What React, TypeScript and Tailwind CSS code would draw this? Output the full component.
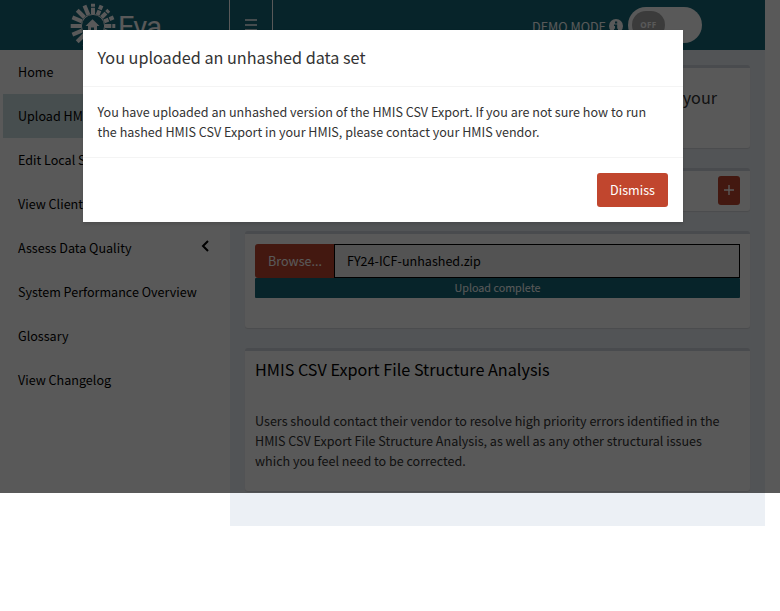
import React from "react";

const navItems = [
  { label: "Home" },
  { label: "Upload HMIS CSV Export", active: true },
  { label: "Edit Local Settings" },
  { label: "View Client Counts" },
  { label: "Assess Data Quality", chevron: true },
  { label: "System Performance Overview" },
  { label: "Glossary" },
  { label: "View Changelog" },
];

function Card({ className, children }: { className: string; children?: React.ReactNode }) {
  return (
    <section className={`rounded-[3px] border-t-[3px] border-[#d2d6de] bg-white shadow-[0_1px_1px_rgba(0,0,0,0.1)] ${className}`}>
      {children}
    </section>
  );
}

function Logo() {
  const rays = Array.from({ length: 16 }, (_, i) => i * 22.5);
  return (
    <svg className="mt-[2px]" width="46" height="46" viewBox="-23 -23 46 46" fill="none" stroke="#fff">
      {rays.map((a, i) => (
        <line
          key={a}
          x1="0"
          y1="-22.3"
          x2="0"
          y2="-12"
          strokeWidth="4"
          strokeDasharray={i < 5 ? (i % 2 ? "4.5 1 5" : "3 1 7") : undefined}
          transform={`rotate(${a})`}
        />
      ))}
      <path d="M-.5-6.8 6.5 0H4v5.5H1V1.5h-3v4h-3V0h-2.5Z" fill="#fff" stroke="none" />
      <circle r="11.6" strokeWidth="1" />
    </svg>
  );
}

function Header() {
  return (
    <header className="flex h-[50px] w-[765px] bg-[#16697a] text-white">
      <div className="flex w-[229px] items-center pl-[70px]">
        <Logo />
        <span className="ml-[2px] mt-[4px] font-[Roboto,sans-serif] text-[29px] leading-[40px] font-normal tracking-[-0.8px]">Eva</span>
      </div>
      <div className="flex w-11 justify-center border-x border-white pt-[19px]">
        <svg width="12" height="12" viewBox="0 0 12 12" fill="#fff">
          <path d="M0 .2h12v1.500H0zM0 5.200h12v1.500H0zM0 10.200h12v1.500H0z" />
        </svg>
      </div>
      <div className="flex flex-1 items-start justify-end pr-[63px]">
        <span className="mt-[16.5px] text-[12.57px] leading-5">DEMO MODE</span>
        <svg className="mt-[19px] ml-[3px]" width="14" height="14" viewBox="0 0 14 14">
          <circle cx="7" cy="7" r="7" fill="#fff" />
          <path d="M6 2.500h2.200v2H6zM5 5.600h3.200v4.200H9v1.400H5V9.800h1V7H5z" fill="#16697a" />
        </svg>
        <div className="mt-[7px] ml-[5px] h-9 w-[74px] rounded-full bg-white p-1">
          <div className="flex h-7 w-[33px] items-center justify-center rounded-full bg-[#aaa] font-['Open_Sans',sans-serif] text-[8px] font-bold tracking-[0.4px]">
            OFF
          </div>
        </div>
      </div>
    </header>
  );
}

function Sidebar() {
  return (
    <nav className="w-[230px] text-[12.57px] leading-5 text-black">
      {navItems.map((item) => (
        <div
          key={item.label}
          className={`flex h-11 items-center justify-between border-l-[3px] border-white pr-5 pl-[15px] whitespace-nowrap ${item.active ? "bg-[#cbdfe2]" : ""}`}
        >
          <span>{item.label}</span>
          {item.chevron && (
            <svg className="-mt-1" width="9" height="12" viewBox="0 0 9 12" fill="none" stroke="#000" strokeWidth="2">
              <path d="M7 1 2 6l5 5" />
            </svg>
          )}
        </div>
      ))}
    </nav>
  );
}

function Modal() {
  return (
    <div className="absolute inset-x-0 top-0 h-[493px] bg-black/65 pt-[30px] pl-[83px]">
      <div className="h-48 w-[600px] bg-white text-[#333] shadow-[0_2px_3px_rgba(0,0,0,0.125)]">
        <h4 className="h-[57px] border-b border-[#f4f4f4] px-[14.5px] pt-[17px] text-[16.2px] leading-5">
          You uploaded an unhashed data set
        </h4>
        <p className="h-[71px] border-b border-[#f4f4f4] px-[14.5px] pt-[15px] text-[12.57px] leading-5">
          You have uploaded an unhashed version of the HMIS CSV Export. If you are not sure how to run
          <br />
          the hashed HMIS CSV Export in your HMIS, please contact your HMIS vendor.
        </p>
        <div className="flex justify-end pt-[15px] pr-[15px]">
          <button className="h-[34px] w-[71px] rounded-[3px] bg-[#c1462e] text-[12.57px] leading-5 text-white">Dismiss</button>
        </div>
      </div>
    </div>
  );
}

export default function App() {
  return (
    <div className="relative h-[611px] w-[780px] overflow-hidden bg-white font-['Noto_Sans_CJK_SC',sans-serif]">
      <Header />
      <div className="flex">
        <Sidebar />
        <main className="flex h-[476px] w-[535px] flex-col gap-5 bg-[#ecf0f5] px-[15px] pt-[15px]">
          <Card className="h-[83px]">
            <h4 className="pt-[19px] pr-[33px] text-right text-[16.2px] leading-5 text-[#333]">your</h4>
          </Card>
          <Card className="flex h-[43px] justify-end pt-[5px] pr-[10px]">
            <button className="flex h-[29px] w-[22px] items-center justify-center rounded-[3px] bg-[#c1462e]">
              <svg className="-mt-px" width="10" height="10" viewBox="0 0 10 10" stroke="#fff" strokeWidth="1.4">
                <path d="M5 0v10M0 5h10" />
              </svg>
            </button>
          </Card>
          <Card className="h-[97px] px-[10px] pt-[10px]">
            <div className="flex h-[34px] text-[12.57px] leading-5">
              <span className="flex w-[79px] items-center justify-center rounded-l-[3px] bg-[#c1462e] pl-px text-white">Browse...</span>
              <span className="flex flex-1 items-center border border-black bg-[#eee] pl-3 text-black">FY24-ICF-unhashed.zip</span>
            </div>
            <div className="h-5 rounded-[1px] bg-[#16697a] text-center text-[10.75px] leading-[19px] text-white">Upload complete</div>
          </Card>
          <Card className="h-[143px] px-[10px] pt-2">
            <h4 className="text-[16.2px] leading-5 text-black">HMIS CSV Export File Structure Analysis</h4>
            <p className="mt-8 text-[12.57px] leading-5 whitespace-nowrap text-[#333]">
              Users should contact their vendor to resolve high priority errors identified in the
              <br />
              HMIS CSV Export File Structure Analysis, as well as any other structural issues
              <br />
              which you feel need to be corrected.
            </p>
          </Card>
        </main>
      </div>
      <Modal />
    </div>
  );
}
